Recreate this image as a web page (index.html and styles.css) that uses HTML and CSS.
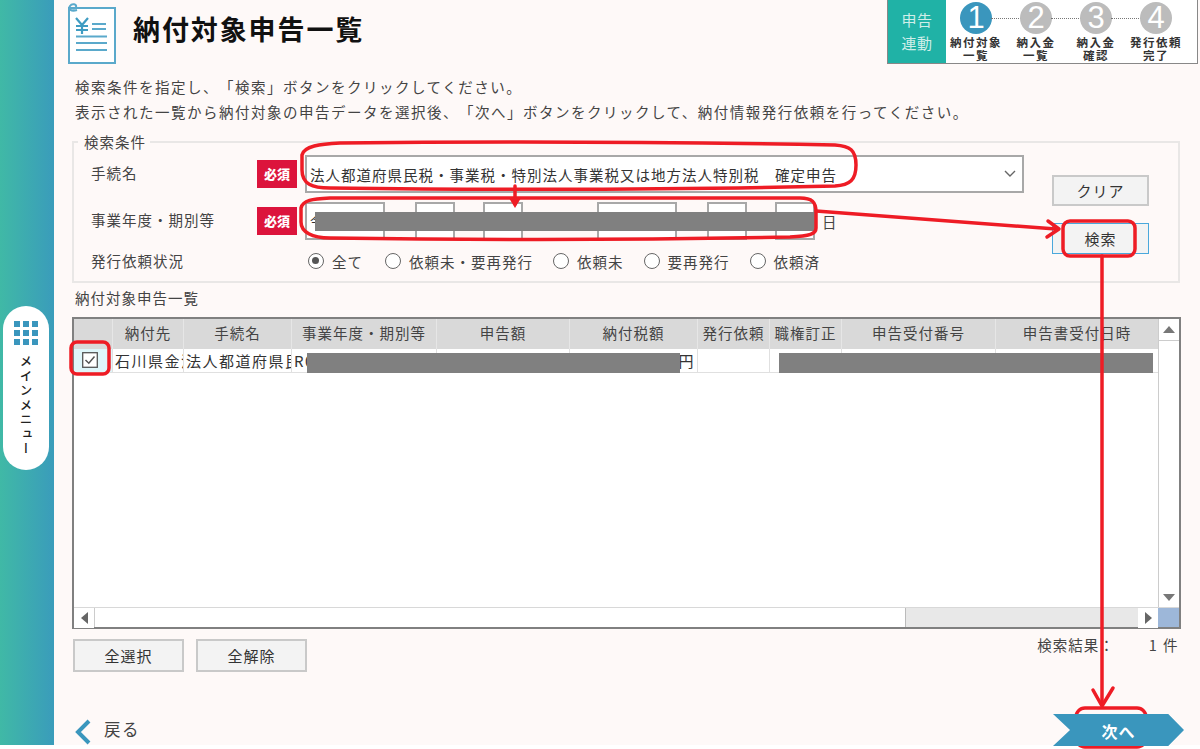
FILE: index.html
```html
<!DOCTYPE html>
<html lang="ja">
<head>
    <meta charset="UTF-8">
    <title>納付対象申告一覧</title>
    <link rel="stylesheet" href="styles.css">
</head>
<body>
<div class="app">
    <aside class="side">
        <div class="menu-pill">
            <svg class="menu-grid" width="24" height="24" viewBox="0 0 24 24">
                <g fill="#3a96bd">
                    <rect x="0" y="0" width="6" height="6"/><rect x="9" y="0" width="6" height="6"/><rect x="18" y="0" width="6" height="6"/>
                    <rect x="0" y="9" width="6" height="6"/><rect x="9" y="9" width="6" height="6"/><rect x="18" y="9" width="6" height="6"/>
                    <rect x="0" y="18" width="6" height="6"/><rect x="9" y="18" width="6" height="6"/><rect x="18" y="18" width="6" height="6"/>
                </g>
            </svg>
            <span class="menu-text">メインメニュー</span>
        </div>
    </aside>

    <main class="main">
        <header class="head">
            <div class="head-left">
                <svg class="doc-icon" width="50" height="62" viewBox="0 0 50 62">
                    <rect x="2" y="5" width="46" height="55" fill="#fff" stroke="#5aa9cb" stroke-width="2"/>
                    <path d="M10 7 C4 9 1 6 3 3 C5 0 10 1 9 4 C8 6 5 6 5 4" fill="none" stroke="#5aa9cb" stroke-width="2"/>
                    <path d="M9 15 L15 22 L21 15 M15 22 V31 M9 23 H21 M9 27 H21" fill="none" stroke="#3f9cc2" stroke-width="2.2"/>
                    <path d="M25 21 H39 M25 26 H39 M9 33.5 H40 M9 40 H40 M9 47 H40" fill="none" stroke="#5aa9cb" stroke-width="2.2"/>
                </svg>
                <h1 class="title">納付対象申告一覧</h1>
            </div>
            <div class="steps">
                <div class="steps-tag">申告<br>連動</div>
                <div class="steps-list">
                    <div class="step">
                        <span class="step-num step-on">1</span>
                        <span class="step-label">納付対象<br>一覧</span>
                    </div>
                    <div class="step">
                        <span class="step-num">2</span>
                        <span class="step-label">納入金<br>一覧</span>
                    </div>
                    <div class="step">
                        <span class="step-num">3</span>
                        <span class="step-label">納入金<br>確認</span>
                    </div>
                    <div class="step">
                        <span class="step-num">4</span>
                        <span class="step-label">発行依頼<br>完了</span>
                    </div>
                </div>
            </div>
        </header>

        <div class="intro">
            <p>検索条件を指定し、「検索」ボタンをクリックしてください。</p>
            <p>表示された一覧から納付対象の申告データを選択後、「次へ」ボタンをクリックして、納付情報発行依頼を行ってください。</p>
        </div>

        <fieldset class="search">
            <legend>検索条件</legend>
            <div class="search-body">
                <div class="fields">
                    <div class="field">
                        <span class="field-name">手続名</span>
                        <span class="required">必須</span>
                        <div class="select">
                            <span>法人都道府県民税・事業税・特別法人事業税又は地方法人特別税　確定申告</span>
                            <svg width="12" height="8" viewBox="0 0 12 8"><path d="M1 1 L6 6 L11 1" fill="none" stroke="#666" stroke-width="1.4"/></svg>
                        </div>
                    </div>
                    <div class="field field-date">
                        <span class="field-name">事業年度・期別等</span>
                        <span class="required">必須</span>
                        <div class="dates">
                            <span class="date-box box-era">令</span>
                            <span class="date-box box-m1"></span>
                            <span class="date-box box-m2"></span>
                            <span class="date-box box-y"></span>
                            <span class="date-box box-m3"></span>
                            <span class="date-box box-m4"></span>
                            <span class="date-end">日</span>
                        </div>
                    </div>
                    <div class="field field-radio">
                        <span class="field-name radio-name">発行依頼状況</span>
                        <div class="radios">
                            <span class="radio radio-on"><i></i>全て</span>
                            <span class="radio"><i></i>依頼未・要再発行</span>
                            <span class="radio"><i></i>依頼未</span>
                            <span class="radio"><i></i>要再発行</span>
                            <span class="radio"><i></i>依頼済</span>
                        </div>
                    </div>
                </div>
                <div class="search-btns">
                    <button class="btn">クリア</button>
                    <button class="btn btn-focus">検索</button>
                </div>
            </div>
        </fieldset>

        <div class="list-title">納付対象申告一覧</div>

        <div class="grid">
            <div class="grid-body">
                <div class="grid-scroll">
                    <div class="row row-head">
                        <span class="c c0"></span>
                        <span class="c c1">納付先</span>
                        <span class="c c2">手続名</span>
                        <span class="c c3">事業年度・期別等</span>
                        <span class="c c4">申告額</span>
                        <span class="c c5">納付税額</span>
                        <span class="c c6">発行依頼</span>
                        <span class="c c7">職権訂正</span>
                        <span class="c c8">申告受付番号</span>
                        <span class="c c9">申告書受付日時</span>
                    </div>
                    <div class="row row-data">
                        <span class="c c0 check-cell">
                            <svg width="16" height="16" viewBox="0 0 16 16">
                                <rect x="0.7" y="0.7" width="14.6" height="14.6" fill="#fff" stroke="#555" stroke-width="1.3"/>
                                <path d="M3.5 8 L6.8 11.2 L12.5 4.5" fill="none" stroke="#555" stroke-width="1.5"/>
                            </svg>
                        </span>
                        <span class="c c1">石川県金沢市</span>
                        <span class="c c2">法人都道府県民税</span>
                        <span class="c c3">R0</span>
                        <span class="c c4"></span>
                        <span class="c c5 yen">円</span>
                        <span class="c c6"></span>
                        <span class="c c7"></span>
                        <span class="c c8"></span>
                        <span class="c c9"></span>
                    </div>
                </div>
                <div class="vbar">
                    <span class="sb-btn sb-up"><svg width="12" height="7" viewBox="0 0 12 7"><path d="M6 0 L12 7 H0 Z" fill="#777"/></svg></span>
                    <span class="vbar-track"></span>
                    <span class="sb-btn"><svg width="12" height="7" viewBox="0 0 12 7"><path d="M0 0 H12 L6 7 Z" fill="#777"/></svg></span>
                </div>
            </div>
            <div class="hbar">
                <span class="sb-btn sb-side"><svg width="7" height="12" viewBox="0 0 7 12"><path d="M7 0 V12 L0 6 Z" fill="#666"/></svg></span>
                <span class="hbar-thumb"></span>
                <span class="hbar-track"></span>
                <span class="sb-btn sb-side"><svg width="7" height="12" viewBox="0 0 7 12"><path d="M0 0 L7 6 L0 12 Z" fill="#666"/></svg></span>
                <span class="sb-corner"></span>
            </div>
        </div>

        <div class="grid-foot">
            <div class="foot-btns">
                <button class="btn btn-wide">全選択</button>
                <button class="btn btn-wide">全解除</button>
            </div>
            <div class="result"><span>検索結果：</span><span>1 件</span></div>
        </div>

        <div class="nav">
            <a class="back">
                <svg width="16" height="26" viewBox="0 0 16 26"><path d="M14 2 L3 13 L14 24" fill="none" stroke="#3a96bd" stroke-width="4"/></svg>
                <span class="back-text">戻る</span>
            </a>
            <a class="next">次へ</a>
        </div>
    </main>
</div>

<!-- redaction bars and red markup drawn on top of the screenshot -->
<div class="redact r-date"></div>
<div class="redact r-row1"></div>
<div class="redact r-row2"></div>
<svg class="marks" width="1200" height="749" viewBox="0 0 1200 749">
    <g fill="none" stroke="#ee1c25" stroke-width="3.5" stroke-linejoin="round" stroke-linecap="round">
        <path d="M302 155 C304 146 320 144 340 143 C500 141 680 142 835 145 C850 146 856 150 856 165 C856 180 850 185 835 186 C680 190 500 190 330 188 C312 188 302 184 302 170 Z"/>
        <path d="M301 208 C303 200 312 199 330 198 H800 C812 198 816 202 816 212 V228 C816 234 810 236 790 237 C640 240 480 240 330 238 C312 238 301 232 301 222 Z"/>
        <path d="M515 186 V204"/>
        <path d="M816 211 L1056 229"/>
        <rect x="1063" y="221" width="72" height="35" rx="7"/>
        <path d="M1102 256 V705"/>
        <path d="M1093 690 L1102 706 L1113 688"/>
        <path d="M1048 221 L1059 229 L1047 237"/>
        <rect x="71" y="342" width="38" height="32" rx="6"/>
        <rect x="1076" y="708" width="70" height="39" rx="9"/>
    </g>
    <path d="M509 198 H521 L515 208 Z" fill="#ee1c25"/>
</svg>
</body>
</html>
```

FILE: styles.css
```css
* {
    box-sizing: border-box;
}
html, body {
    margin: 0;
    padding: 0;
    height: 749px;
    overflow: hidden;
    background-color: #fff;
}
body {
    position: relative;
    font-family: "Noto Sans CJK JP", "Noto Sans", sans-serif;
    font-size: 14.5px;
    letter-spacing: 1px;
    color: #444;
    text-spacing-trim: space-all;
}
p {
    margin: 0;
}
.app {
    display: flex;
    width: 1200px;
    height: 745px;
}

/* left strip */
.side {
    width: 54px;
    flex: none;
    padding: 306px 0 0 3px;
    background: linear-gradient(90deg, #40b9a6 0%, #3a9cbb 100%);
}
.menu-pill {
    width: 46px;
    height: 164px;
    border-radius: 23px;
    background: #fff;
    display: flex;
    flex-direction: column;
    align-items: center;
    padding-top: 15px;
}
.menu-text {
    margin-top: 10px;
    writing-mode: vertical-rl;
    font-size: 12.5px;
    font-weight: 500;
    letter-spacing: 2px;
    color: #222;
}

.main {
    flex: 1;
    background-color: #fef9f8;
    padding-left: 18px;
    display: flex;
    flex-direction: column;
}
.main > * {
    flex: none;
}

/* header */
.head {
    display: flex;
    justify-content: space-between;
    height: 65px;
    padding-right: 2px;
}
.head-left {
    display: flex;
    align-items: flex-start;
}
.doc-icon {
    margin: 3px 0 0 -5px;
}
.title {
    margin: 9px 0 0 16px;
    font-size: 27px;
    line-height: 40px;
    letter-spacing: 1.9px;
    font-weight: 700;
    color: #111;
}
.steps {
    display: flex;
    width: 311px;
    height: 65px;
    margin-top: -1px;
    border: 1px solid #888;
    border-top-color: #ccc;
    background: #fff;
}
.steps-tag {
    width: 58px;
    flex: none;
    background: #20b2a6;
    color: #cfeee9;
    text-align: center;
    font-size: 15px;
    line-height: 23px;
    letter-spacing: 0.5px;
    padding-top: 8px;
}
.steps-list {
    flex: 1;
    display: flex;
    padding: 2px 0 0 0;
}
.step {
    position: relative;
    width: 60px;
    display: flex;
    flex-direction: column;
    align-items: center;
}
.step + .step::before {
    content: "";
    position: absolute;
    top: 16px;
    right: 45px;
    width: 30px;
    border-top: 1px dotted #777;
}
.step-num {
    position: relative;
    width: 32px;
    height: 32px;
    border-radius: 50%;
    background: #bcbcbc;
    color: #fff;
    text-align: center;
    font-family: "Liberation Sans", sans-serif;
    font-size: 31px;
    line-height: 32px;
    letter-spacing: 0;
}
.step-on {
    background: #3a96bd;
}
.step-label {
    font-size: 11.5px;
    line-height: 13px;
    letter-spacing: 1.5px;
    font-weight: 700;
    color: #333;
    text-align: center;
    white-space: nowrap;
    margin-top: 2px;
}

/* guidance */
.intro {
    padding: 9px 0 0 3px;
    font-size: 14.5px;
    letter-spacing: 1.5px;
    line-height: 25px;
}

/* search box */
.search {
    width: 1108px;
    height: 149px;
    margin: 10px 0 0 0;
    padding: 0;
    border: 2px solid #e9e7e6;
    border-radius: 0;
}
.search legend {
    margin-left: 4px;
    padding: 0 4px 0 6px;
    line-height: 16px;
}
.search-body {
    display: flex;
    padding-top: 5px;
}
.fields {
    width: 970px;
    flex: none;
}
.field {
    display: flex;
    align-items: center;
    height: 38px;
    padding-left: 17px;
}
.field-date {
    margin-top: 9px;
}
.field-radio {
    height: 24px;
    margin-top: 9px;
}
.field-name {
    width: 166px;
    flex: none;
    padding-bottom: 3px;
}
.radio-name {
    width: 217px;
    padding-bottom: 1px;
}
.required {
    width: 40px;
    height: 28px;
    flex: none;
    margin-right: 8px;
    background: #dc143c;
    color: #fff;
    text-align: center;
    font-size: 13px;
    font-weight: 900;
    line-height: 28px;
    letter-spacing: 0;
}
.select {
    width: 719px;
    height: 38px;
    flex: none;
    border: 2px solid #a8a8a8;
    background: #fff;
    display: flex;
    justify-content: space-between;
    align-items: center;
    padding: 0 6px 0 3px;
    white-space: nowrap;
    color: #333;
    letter-spacing: 1px;
}
.dates {
    display: flex;
    align-items: center;
}
.date-box {
    height: 38px;
    flex: none;
    border: 2px solid #a8a8a8;
    background: #fff;
    padding: 6px 0 0 3px;
    color: #333;
}
.box-era { width: 80px; }
.box-m1 { width: 40px; margin-left: 30px; }
.box-m2 { width: 40px; margin-left: 28px; }
.box-y { width: 80px; margin-left: 74px; }
.box-m3 { width: 40px; margin-left: 30px; }
.box-m4 { width: 40px; margin-left: 28px; }
.date-end { margin-left: 7px; }
.radios {
    display: flex;
    align-items: center;
}
.radio {
    display: flex;
    align-items: center;
    gap: 8px;
    margin-right: 20px;
}
.radio-on {
    margin-right: 22px;
}
.radio i {
    width: 16px;
    height: 16px;
    border-radius: 50%;
    border: 1.5px solid #666;
    background: #fff;
    position: relative;
}
.radio-on i::after {
    content: "";
    position: absolute;
    left: 3px;
    top: 3px;
    width: 7px;
    height: 7px;
    border-radius: 50%;
    background: #555;
}
.search-btns {
    padding-top: 20px;
    display: flex;
    flex-direction: column;
    gap: 17px;
    margin-left: 8px;
}
.btn {
    width: 97px;
    height: 31px;
    padding: 0;
    border: 2px solid #c9c9c9;
    background: #f3f3f3;
    font-family: inherit;
    font-size: 15px;
    letter-spacing: 1px;
    color: #333;
}
.btn-focus {
    border: 1px solid #4aa8dc;
}
.btn-wide {
    width: 111px;
    height: 33px;
}

/* list */
.list-title {
    padding: 4px 0 0 3px;
    height: 34px;
    line-height: 22px;
}
.grid {
    width: 1109px;
    height: 312px;
    border: 2px solid #808080;
    background: #fff;
    display: flex;
    flex-direction: column;
}
.grid-body {
    flex: 1;
    display: flex;
    min-height: 0;
}
.grid-scroll {
    flex: 1;
    min-width: 0;
}
.row {
    display: flex;
}
.row-head {
    height: 30px;
    background: #d9d9d9;
    line-height: 28px;
    text-align: center;
}
.row-head .c {
    border-right: 1px solid #e6e6e6;
}
.row-data {
    height: 24px;
    line-height: 23px;
    color: #333;
    border-bottom: 1px solid #e0e0e0;
    font-size: 15px;
    letter-spacing: 1.5px;
}
.row-data .c {
    border-right: 1px solid #e0e0e0;
    padding-left: 2px;
}
.c {
    display: block;
    flex: none;
    overflow: hidden;
    white-space: nowrap;
}
.c0 { width: 39px; }
.c1 { width: 71px; }
.c2 { width: 108px; }
.c3 { width: 145px; }
.c4 { width: 133px; }
.c5 { width: 128px; }
.c6 { width: 72px; }
.c7 { width: 72px; }
.c8 { width: 154px; }
.c9 { width: 163px; }
.row-data .check-cell {
    background: #dff6fa;
    padding: 3px 0 0 8px;
    line-height: 0;
}
.yen {
    text-align: right;
    padding-right: 2px;
}
.vbar {
    width: 21px;
    flex: none;
    display: flex;
    flex-direction: column;
    background: #fff;
    border-left: 1px solid #ccc;
}
.vbar-track {
    flex: 1;
    background: #fff;
}
.sb-btn {
    width: 20px;
    height: 20px;
    flex: none;
    display: flex;
    align-items: center;
    justify-content: center;
    background: #fff;
}
.sb-up {
    height: 22px;
    border-bottom: 1px solid #ccc;
}
.hbar {
    height: 20px;
    flex: none;
    display: flex;
    border-top: 1px solid #d8d8d8;
}
.hbar-thumb {
    width: 812px;
    background: #fff;
    border-left: 1px solid #ccc;
    border-right: 1px solid #bbb;
}
.hbar-track {
    flex: 1;
    background: #e8e8e8;
}
.sb-corner {
    width: 21px;
    flex: none;
    background: #9db7d9;
}
.grid-foot {
    display: flex;
    justify-content: space-between;
    width: 1107px;
    padding: 10px 0 0 1px;
}
.foot-btns {
    display: flex;
    gap: 12px;
}
.result {
    display: flex;
    gap: 34px;
    margin-top: -6px;
    line-height: 24px;
}
.result span + span {
    letter-spacing: 1.5px;
}
.nav {
    display: flex;
    justify-content: space-between;
    width: 1112px;
    padding-top: 47px;
}
.back {
    display: flex;
    align-items: center;
    height: 26px;
    gap: 13px;
    margin-left: 3px;
    font-size: 16.5px;
    letter-spacing: 1.5px;
}
.back-text {
    padding-bottom: 6px;
}
.next {
    display: block;
    width: 131px;
    height: 32px;
    margin-top: -5px;
    background: #3a96bd;
    clip-path: polygon(0 0, 88% 0, 100% 50%, 88% 100%, 0 100%, 13% 50%);
    color: #fff;
    text-align: center;
    font-size: 16px;
    font-weight: 700;
    line-height: 35px;
    position: relative;
    z-index: 1;
}

/* overlays */
.redact {
    position: absolute;
    background: #808080;
}
.r-date { left: 315px; top: 212px; width: 500px; height: 19px; }
.r-row1 { left: 307px; top: 353px; width: 373px; height: 20px; }
.r-row2 { left: 779px; top: 353px; width: 374px; height: 20px; }
.marks {
    position: absolute;
    left: 0;
    top: 0;
}
```
